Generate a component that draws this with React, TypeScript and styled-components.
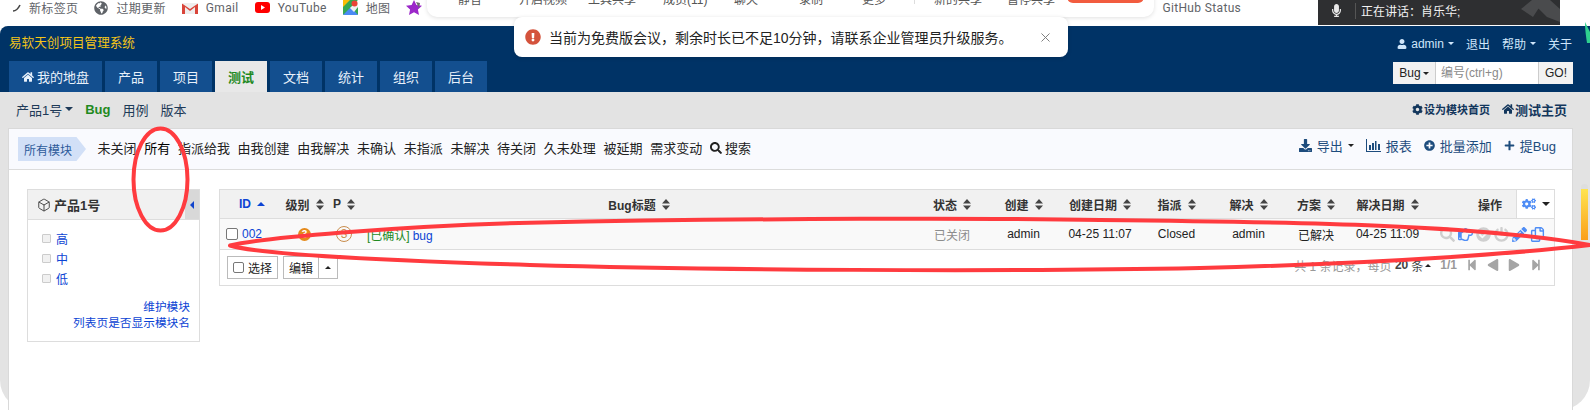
import React from "react";
import styled, { createGlobalStyle } from "styled-components";
import {
  FaCheckCircle,
  FaCog,
  FaCogs,
  FaDownload,
  FaExclamationCircle,
  FaGlobeAmericas,
  FaHome,
  FaMicrophone,
  FaPencilAlt,
  FaPlay,
  FaPlus,
  FaPlusCircle,
  FaPowerOff,
  FaRegCopy,
  FaRegHandPointRight,
  FaSearch,
  FaStepBackward,
  FaStepForward,
  FaUser,
} from "react-icons/fa";
import { Box, X } from "lucide-react";

const FONT = `"Liberation Sans", "Noto Sans CJK SC", sans-serif`;
const COLUMNS = "60px 49px 30px 560px 66px 77px 76px 77px 67px 68px 75px 91px 1fr";

const GlobalStyle = createGlobalStyle`
  html, body {
    margin: 0;
    padding: 0;
    background: #fff;
  }
  body {
    font-family: ${FONT};
    font-size: 13px;
    color: #333;
  }
`;

const Page = styled.div`
  position: relative;
  width: 1590px;
  height: 416px;
  overflow: hidden;
  background: #fff;
`;

const BookmarkBar = styled.div`
  display: flex;
  align-items: center;
  height: 26px;
  padding: 0 0 11px 12px;
  box-sizing: border-box;
  font-family: Roboto, "Noto Sans CJK SC", sans-serif;
  font-size: 12px;
  letter-spacing: 0.35px;
  color: #5f6368;
`;

const Bookmark = styled.div<{ $ml?: number }>`
  display: flex;
  align-items: center;
  gap: 8px;
  margin-left: ${(p) => p.$ml ?? 16}px;
  white-space: nowrap;
`;

const AppFrame = styled.div`
  display: flex;
  flex-direction: column;
  height: 384px;
  background: #e3e3e3;
  border-radius: 8px 0 30px 30px;
`;

const Header = styled.header`
  height: 66px;
  background: #003366;
  border-top-left-radius: 8px;
  flex-shrink: 0;
`;

const HeaderTop = styled.div`
  display: flex;
  align-items: center;
  justify-content: space-between;
  height: 35px;
  padding: 0 18px 0 9px;
  box-sizing: border-box;
`;

const Brand = styled.div`
  padding-bottom: 4px;
  color: #f5c518;
  font-size: 12.6px;
`;

const UserNav = styled.div`
  display: flex;
  align-items: center;
  gap: 12px;
  color: #cfe6fb;
  font-size: 12px;
`;

const UserItem = styled.span`
  display: flex;
  align-items: center;
  gap: 4px;
`;

const Caret = styled.i<{ $up?: boolean; $color?: string; $size?: number }>`
  display: inline-block;
  width: 0;
  height: 0;
  border-left: ${(p) => p.$size ?? 3}px solid transparent;
  border-right: ${(p) => p.$size ?? 3}px solid transparent;
  ${(p) => (p.$up ? "border-bottom" : "border-top")}: ${(p) => p.$size ?? 3}px solid ${(p) => p.$color ?? "currentColor"};
`;

const HeaderBottom = styled.div`
  display: flex;
  justify-content: space-between;
  padding: 0 17px 0 9px;
`;

const Tabs = styled.nav`
  display: flex;
  gap: 3px;
`;

const Tab = styled.a<{ $active?: boolean }>`
  display: flex;
  align-items: center;
  gap: 3px;
  height: 31px;
  padding: 0 13px;
  box-sizing: border-box;
  font-size: 13px;
  background: ${(p) => (p.$active ? "#e8e8e8" : "#134f8f")};
  color: ${(p) => (p.$active ? "#1f8a1f" : "#e8f1fb")};
  font-weight: ${(p) => (p.$active ? 700 : 400)};
`;

const SearchBox = styled.div`
  display: flex;
  width: 180px;
  height: 22px;
  margin-top: 1px;
  background: #fff;
  font-size: 12px;
`;

const SearchType = styled.div`
  display: flex;
  align-items: center;
  justify-content: center;
  gap: 2px;
  width: 43px;
  background: #f2f2f2;
  border-right: 1px solid #ccc;
  color: #222;
  box-sizing: border-box;
`;

const SearchInput = styled.input`
  flex: 1;
  min-width: 0;
  border: 0;
  outline: 0;
  padding: 0 5px;
  font: 12px ${FONT};
  &::placeholder {
    color: #8a8a8a;
    opacity: 1;
  }
`;

const SearchGo = styled.div`
  display: flex;
  align-items: center;
  justify-content: center;
  width: 35px;
  background: #f2f2f2;
  border-left: 1px solid #ccc;
  box-sizing: border-box;
  color: #222;
`;

const SubNav = styled.div`
  display: flex;
  align-items: center;
  justify-content: space-between;
  height: 36px;
  padding: 0 23px 2px 16px;
  box-sizing: border-box;
  flex-shrink: 0;
  color: #1e3a58;
`;

const SubNavGroup = styled.div`
  display: flex;
  align-items: center;
  gap: 12px;
`;

const ProductPicker = styled.span`
  display: flex;
  align-items: center;
  gap: 3px;
`;

const SubLink = styled.a<{ $active?: boolean }>`
  color: ${(p) => (p.$active ? "#1f8a1f" : "#1e3a58")};
  font-weight: ${(p) => (p.$active ? 700 : 400)};
`;

const SubAction = styled.a<{ $size: number }>`
  display: flex;
  align-items: center;
  gap: 1px;
  font-size: ${(p) => p.$size}px;
  font-weight: 700;
  color: #12365c;
`;

const Card = styled.main`
  flex: 1;
  margin: 0 17px 0 8px;
  background: #fff;
  border: 1px solid #d9d9d9;
  border-width: 1px 1px 0;
`;

const Toolbar = styled.div`
  display: flex;
  align-items: center;
  justify-content: space-between;
  height: 41px;
  padding: 0 16px 0 9px;
  box-sizing: border-box;
  background: #f9fafe;
  border-bottom: 1px solid #dcdcdc;
`;

const FilterGroup = styled.div`
  display: flex;
  align-items: center;
  gap: 7.7px;
`;

const ModuleTag = styled.div`
  display: flex;
  align-items: center;
  width: 68px;
  height: 24px;
  margin-right: 3.8px;
  padding-left: 6px;
  box-sizing: border-box;
  font-size: 12px;
  color: #2d5a9a;
  background: #d2e0f7;
  clip-path: polygon(0 0, 86% 0, 100% 50%, 86% 100%, 0 100%);
`;

const Filter = styled.a<{ $active?: boolean }>`
  display: flex;
  align-items: center;
  gap: 3px;
  padding-bottom: 3px;
  color: ${(p) => (p.$active ? "#000" : "#222")};
`;

const ActionGroup = styled.div`
  display: flex;
  align-items: center;
  gap: 12px;
  padding-bottom: 7px;
  color: #1d4c7d;
`;

const ToolAction = styled.a`
  display: flex;
  align-items: center;
  gap: 5px;
  color: #1d4c7d;
`;

const Body = styled.div`
  display: flex;
  align-items: flex-start;
  gap: 19px;
  padding: 19px 17px 0 18px;
`;

const Sidebar = styled.aside`
  display: flex;
  flex-direction: column;
  width: 173px;
  height: 153px;
  flex-shrink: 0;
  box-sizing: border-box;
  border: 1px solid #ddd;
`;

const SideHead = styled.div`
  display: flex;
  align-items: center;
  height: 30px;
  box-sizing: border-box;
  background: #f1f1f1;
  border-bottom: 1px solid #ddd;
  padding-left: 9px;
  gap: 3px;
  font-size: 13px;
  font-weight: 700;
  color: #333;
`;

const SideToggle = styled.div`
  display: flex;
  align-items: center;
  justify-content: center;
  align-self: stretch;
  width: 14px;
  margin-left: auto;
  background: #d8d8d8;
`;

const LeftCaret = styled.i`
  width: 0;
  height: 0;
  border-top: 4px solid transparent;
  border-bottom: 4px solid transparent;
  border-right: 4px solid #1144cc;
`;

const SideList = styled.ul`
  list-style: none;
  margin: 0;
  padding: 8px 0 0 14px;
`;

const SideItem = styled.li`
  display: flex;
  align-items: center;
  gap: 5px;
  height: 20px;
  font-size: 12px;
  color: #0c44d4;
`;

const SideBullet = styled.i`
  width: 7px;
  height: 7px;
  background: #f1f1f1;
  border: 1px solid #ccc;
  border-radius: 1px;
`;

const SideLinks = styled.div`
  display: flex;
  flex-direction: column;
  align-items: flex-end;
  margin-top: auto;
  padding: 0 9px 10px 0;
  font-size: 11.7px;
  line-height: 16px;
  color: #0c44d4;
`;

const BugTable = styled.section`
  flex: 1;
  box-sizing: border-box;
  border: 1px solid #ddd;
  font-size: 12px;
`;

const HeadRow = styled.div`
  display: grid;
  grid-template-columns: ${COLUMNS};
  height: 29px;
  box-sizing: border-box;
  background: #f1f1f1;
  border-bottom: 1px solid #ddd;
  font-weight: 700;
  color: #333;
`;

const HeadCell = styled.div<{ $justify?: string; $pad?: number; $padRight?: number; $bg?: string }>`
  display: flex;
  align-items: center;
  justify-content: ${(p) => p.$justify ?? "center"};
  gap: 6px;
  padding-left: ${(p) => p.$pad ?? 0}px;
  padding-right: ${(p) => p.$padRight ?? 0}px;
  box-sizing: border-box;
  ${(p) => p.$bg && `background: ${p.$bg}; border-left: 1px solid #ddd;`}
`;

const DataRow = styled.div`
  display: grid;
  grid-template-columns: ${COLUMNS};
  height: 31px;
  box-sizing: border-box;
  background: #f9f9f9;
  border-bottom: 1px solid #ddd;
  color: #222;
`;

const Cell = styled.div<{ $justify?: string; $muted?: boolean; $pad?: number }>`
  display: flex;
  align-items: center;
  justify-content: ${(p) => p.$justify ?? "center"};
  gap: 4px;
  padding-left: ${(p) => p.$pad ?? 0}px;
  color: ${(p) => (p.$muted ? "#8c8c8c" : "#222")};
  white-space: nowrap;
`;

const CheckBox = styled.i<{ $size?: number }>`
  display: inline-block;
  width: ${(p) => p.$size ?? 10}px;
  height: ${(p) => p.$size ?? 10}px;
  background: #fff;
  border: 1px solid #777;
  border-radius: 2px;
  flex-shrink: 0;
`;

const LinkText = styled.a`
  color: #0c44d4;
`;

const StatusTag = styled.span`
  color: #1f8a1f;
  margin-right: 3px;
`;

const Severity = styled.span`
  display: flex;
  align-items: center;
  justify-content: center;
  width: 13px;
  height: 13px;
  border-radius: 50%;
  background: #e58a1b;
  color: #fff;
  font-size: 10px;
  font-weight: 700;
`;

const Priority = styled.span`
  display: flex;
  align-items: center;
  justify-content: center;
  width: 14px;
  height: 14px;
  border-radius: 50%;
  border: 1px solid #c98d4d;
  color: #c98d4d;
  font-size: 12px;
`;

const RowActions = styled.div`
  display: flex;
  align-items: center;
  gap: 2px;
  grid-column: 12 / 14;
  padding-left: 14px;
  font-size: 15px;
`;

const RowIcon = styled.span<{ $blue?: boolean }>`
  display: flex;
  justify-content: center;
  width: 16px;
  color: ${(p) => (p.$blue ? "#4f8df5" : "#cfcfcf")};
`;

const TableFoot = styled.div`
  display: flex;
  align-items: flex-start;
  justify-content: space-between;
  height: 35px;
  padding: 6px 12px 0 7px;
  box-sizing: border-box;
`;

const FootButtons = styled.div`
  display: flex;
  gap: 5px;
`;

const FootButton = styled.button<{ $tight?: boolean }>`
  display: flex;
  align-items: center;
  gap: 4px;
  height: 23px;
  padding: 0 ${(p) => (p.$tight ? 6 : 5)}px;
  background: #fff;
  border: 1px solid #bbb;
  font: 12px ${FONT};
  color: #222;
  ${(p) => p.$tight && "border-left: 0;"}
`;

const SplitButton = styled.div`
  display: flex;
`;

const Pager = styled.div`
  display: flex;
  align-items: center;
  height: 20px;
  margin-top: -1px;
  color: #999;
  font-size: 12px;
  white-space: nowrap;
`;

const PagerStrong = styled.strong`
  color: #444;
`;

const PagerUnit = styled.span`
  margin: 0 2px 0 3px;
  color: #444;
`;

const PagerTotal = styled.span`
  margin-left: 9px;
  font-weight: 700;
`;

const PagerIcon = styled.span<{ $ml: number; $flip?: boolean }>`
  display: flex;
  margin-left: ${(p) => p.$ml}px;
  color: #a5a5a5;
  font-size: 12px;
  ${(p) => p.$flip && "transform: scaleX(-1);"}
`;

/* things floating over the page */
const MeetingBar = styled.div`
  position: absolute;
  left: 427px;
  top: -20px;
  display: flex;
  align-items: flex-start;
  width: 727px;
  height: 37px;
  padding: 10px 0 0 31px;
  box-sizing: border-box;
  background: #fff;
  border-radius: 0 0 10px 10px;
  box-shadow: 0 1px 4px rgba(0, 0, 0, 0.12);
  font-size: 12px;
  color: #555;
`;

const MeetingItem = styled.span<{ $w: number }>`
  width: ${(p) => p.$w}px;
  flex-shrink: 0;
  white-space: nowrap;
`;

const MeetingDivider = styled.i`
  width: 1px;
  height: 14px;
  margin-right: 19px;
  background: #ddd;
`;

const MeetingEnd = styled.i`
  width: 77px;
  height: 13px;
  background: #f25c3f;
  border-radius: 0 0 6px 6px;
`;

const Toast = styled.div`
  position: absolute;
  left: 514px;
  top: 17px;
  display: flex;
  align-items: center;
  gap: 8px;
  width: 554px;
  height: 40px;
  padding: 0 15px 0 11px;
  box-sizing: border-box;
  background: #fff;
  border-radius: 8px;
  box-shadow: 0 1px 4px rgba(0, 0, 0, 0.15);
  font-size: 14px;
  color: #222;
`;

const ToastClose = styled.span`
  display: flex;
  margin-left: auto;
  color: #777;
`;

const SpeakingBar = styled.div`
  position: absolute;
  left: 1318px;
  top: 0;
  display: flex;
  align-items: center;
  width: 242px;
  height: 25px;
  padding: 0 0 4px 12px;
  box-sizing: border-box;
  background: #2e2f31;
  color: #f2f2f2;
  font-size: 12px;
`;

const SpeakingDivider = styled.i`
  width: 1px;
  height: 16px;
  margin: 0 5px 0 12px;
  background: #555;
`;

const Watermark = styled.svg`
  position: absolute;
  right: 0;
  top: 0;
`;

const GreenEdge = styled.svg`
  position: absolute;
  right: 0;
  top: 22px;
`;

const ScrollGlow = styled.div`
  position: absolute;
  left: 1581px;
  top: 184px;
  width: 7px;
  height: 56px;
  border-radius: 3px 3px 0 0;
  background: linear-gradient(#dedede 0 5px, #ffe44f 5px, #fb9f1a 100%);
`;

const Annotations = styled.svg`
  position: absolute;
  left: 0;
  top: 0;
  pointer-events: none;
`;

const SortIcon = () => (
  <svg width="8" height="11" viewBox="0 0 8 11" fill="#444">
    <path d="M4 0 8 4.5H0ZM4 11 0 6.5H8Z" />
  </svg>
);

const ReportIcon = () => (
  <svg width="15" height="13" viewBox="0 0 15 13" fill="#1d4c7d">
    <path d="M0 0h1v12h14v1H0Z" />
    <path d="M3 6h2v5H3ZM6 4h2v7H6ZM9 2h1.5v9H9ZM12 5h2v6h-2Z" />
  </svg>
);

const NewTabMark = () => (
  <svg width="9" height="8" viewBox="0 0 9 8" fill="none" stroke="#444" strokeWidth="1.6">
    <path d="M1 7C3 7 6 5 8 1" />
  </svg>
);

const GmailIcon = () => (
  <svg width="16" height="12" viewBox="0 0 16 12">
    <rect x="1" y="1" width="14" height="11" fill="#eee" />
    <path d="M0 12V1.5L8 7l8-5.5V12h-3V5L8 9 3 5v7Z" fill="#d9453a" />
  </svg>
);

const YouTubeIcon = () => (
  <svg width="15" height="11" viewBox="0 0 15 11">
    <rect width="15" height="11" rx="3" fill="#f00" />
    <path d="M6 3v5l4-2.5Z" fill="#fff" />
  </svg>
);

const MapsIcon = () => (
  <svg width="15" height="15" viewBox="0 0 15 15">
    <rect width="15" height="15" rx="1" fill="#36a852" />
    <path d="M0 15 8 7l7 8Z" fill="#4a8af4" />
    <path d="M0 0h7L0 7Z" fill="#fbbc04" />
    <path d="M7 8 15 0v7l-4 5Z" fill="#f1f1f1" />
    <circle cx="11.5" cy="3.5" r="3" fill="#ea4335" />
  </svg>
);

const StarIcon = () => (
  <svg width="16" height="15" viewBox="0 0 16 15">
    <path d="M8 0l2.4 5 5.6.7-4.1 3.8 1.1 5.5L8 12.2 3 15l1.1-5.5L0 5.7 5.6 5Z" fill="#9b27c9" />
    <path d="M10 2l4 1-1 5Z" fill="#6d6d6d" />
  </svg>
);

const filters = ["未确认", "未指派", "未解决", "待关闭", "久未处理", "被延期", "需求变动"];
const tabs = ["产品", "项目", "测试", "文档", "统计", "组织", "后台"];
const sortable = ["状态", "创建", "创建日期", "指派", "解决", "方案", "解决日期"];

const App = () => (
  <Page>
    <GlobalStyle />
    <BookmarkBar>
      <Bookmark $ml={0}>
        <NewTabMark />
        新标签页
      </Bookmark>
      <Bookmark>
        <FaGlobeAmericas size={14} color="#5f6368" />
        过期更新
      </Bookmark>
      <Bookmark>
        <GmailIcon />
        Gmail
      </Bookmark>
      <Bookmark>
        <YouTubeIcon />
        YouTube
      </Bookmark>
      <Bookmark>
        <MapsIcon />
        地图
      </Bookmark>
      <Bookmark>
        <StarIcon />
      </Bookmark>
      <Bookmark $ml={740}>GitHub Status</Bookmark>
    </BookmarkBar>

    <AppFrame>
      <Header>
        <HeaderTop>
          <Brand>易软天创项目管理系统</Brand>
          <UserNav>
            <UserItem>
              <FaUser size={10} />
              admin
              <Caret />
            </UserItem>
            <span>退出</span>
            <UserItem>
              帮助
              <Caret />
            </UserItem>
            <span>关于</span>
          </UserNav>
        </HeaderTop>
        <HeaderBottom>
          <Tabs>
            <Tab>
              <FaHome size={12} />
              我的地盘
            </Tab>
            {tabs.map((t) => (
              <Tab key={t} $active={t === "测试"}>
                {t}
              </Tab>
            ))}
          </Tabs>
          <SearchBox>
            <SearchType>
              Bug
              <Caret />
            </SearchType>
            <SearchInput placeholder="编号(ctrl+g)" />
            <SearchGo>GO!</SearchGo>
          </SearchBox>
        </HeaderBottom>
      </Header>

      <SubNav>
        <SubNavGroup>
          <ProductPicker>
            产品1号
            <Caret $size={4} />
          </ProductPicker>
          <SubLink $active>Bug</SubLink>
          <SubLink>用例</SubLink>
          <SubLink>版本</SubLink>
        </SubNavGroup>
        <SubNavGroup>
          <SubAction $size={11}>
            <FaCog size={11} />
            设为模块首页
          </SubAction>
          <SubAction $size={13}>
            <FaHome size={12} />
            测试主页
          </SubAction>
        </SubNavGroup>
      </SubNav>

      <Card>
        <Toolbar>
          <FilterGroup>
            <ModuleTag>所有模块</ModuleTag>
            <Filter>未关闭</Filter>
            <Filter $active>所有</Filter>
            <Filter>指派给我</Filter>
            <Filter>由我创建</Filter>
            <Filter>由我解决</Filter>
            {filters.map((f) => (
              <Filter key={f}>{f}</Filter>
            ))}
            <Filter>
              <FaSearch size={12} />
              搜索
            </Filter>
          </FilterGroup>
          <ActionGroup>
            <ToolAction>
              <FaDownload size={13} />
              导出
              <Caret $color="#222" />
            </ToolAction>
            <ToolAction>
              <ReportIcon />
              报表
            </ToolAction>
            <ToolAction>
              <FaPlusCircle size={11} />
              批量添加
            </ToolAction>
            <ToolAction>
              <FaPlus size={11} />
              提Bug
            </ToolAction>
          </ActionGroup>
        </Toolbar>

        <Body>
          <Sidebar>
            <SideHead>
              <Box size={14} strokeWidth={1.5} />
              产品1号
              <SideToggle>
                <LeftCaret />
              </SideToggle>
            </SideHead>
            <SideList>
              {["高", "中", "低"].map((s) => (
                <SideItem key={s}>
                  <SideBullet />
                  {s}
                </SideItem>
              ))}
            </SideList>
            <SideLinks>
              <a>维护模块</a>
              <a>列表页是否显示模块名</a>
            </SideLinks>
          </Sidebar>

          <BugTable>
            <HeadRow>
              <HeadCell $justify="flex-start" $pad={19}>
                <LinkText>ID</LinkText>
                <Caret $up $size={4} $color="#0c44d4" />
              </HeadCell>
              <HeadCell>
                级别
                <SortIcon />
              </HeadCell>
              <HeadCell>
                P
                <SortIcon />
              </HeadCell>
              <HeadCell>
                Bug标题
                <SortIcon />
              </HeadCell>
              {sortable.map((c) => (
                <HeadCell key={c}>
                  {c}
                  <SortIcon />
                </HeadCell>
              ))}
              <HeadCell $justify="flex-end" $padRight={14}>
                操作
              </HeadCell>
              <HeadCell $bg="#fff">
                <FaCogs size={14} color="#4f8df5" />
                <Caret $size={4} $color="#222" />
              </HeadCell>
            </HeadRow>
            <DataRow>
              <Cell $justify="flex-start" $pad={6}>
                <CheckBox />
                <LinkText>002</LinkText>
              </Cell>
              <Cell>
                <Severity>3</Severity>
              </Cell>
              <Cell>
                <Priority>3</Priority>
              </Cell>
              <Cell $justify="flex-start" $pad={8}>
                <span>
                  <StatusTag>[已确认]</StatusTag>
                  <LinkText>bug</LinkText>
                </span>
              </Cell>
              <Cell $muted>已关闭</Cell>
              <Cell>admin</Cell>
              <Cell>04-25 11:07</Cell>
              <Cell>Closed</Cell>
              <Cell>admin</Cell>
              <Cell>已解决</Cell>
              <Cell>04-25 11:09</Cell>
              <RowActions>
                <RowIcon>
                  <FaSearch />
                </RowIcon>
                <RowIcon $blue>
                  <FaRegHandPointRight />
                </RowIcon>
                <RowIcon>
                  <FaCheckCircle />
                </RowIcon>
                <RowIcon>
                  <FaPowerOff />
                </RowIcon>
                <RowIcon $blue>
                  <FaPencilAlt />
                </RowIcon>
                <RowIcon $blue>
                  <FaRegCopy />
                </RowIcon>
              </RowActions>
            </DataRow>
            <TableFoot>
              <FootButtons>
                <FootButton>
                  <CheckBox $size={9} />
                  选择
                </FootButton>
                <SplitButton>
                  <FootButton>编辑</FootButton>
                  <FootButton $tight>
                    <Caret $up $color="#222" />
                  </FootButton>
                </SplitButton>
              </FootButtons>
              <Pager>
                共 1 条记录，每页&nbsp;<PagerStrong>20</PagerStrong>
                <PagerUnit>条</PagerUnit>
                <Caret $up $color="#222" />
                <PagerTotal>1/1</PagerTotal>
                <PagerIcon $ml={9}>
                  <FaStepBackward />
                </PagerIcon>
                <PagerIcon $ml={9} $flip>
                  <FaPlay />
                </PagerIcon>
                <PagerIcon $ml={9}>
                  <FaPlay />
                </PagerIcon>
                <PagerIcon $ml={10}>
                  <FaStepForward />
                </PagerIcon>
              </Pager>
            </TableFoot>
          </BugTable>
        </Body>
      </Card>
    </AppFrame>

    <ScrollGlow />

    <GreenEdge width="5" height="21" viewBox="0 0 5 21">
      <path d="M0 0 5 10V21H2C1 14 0 8 0 0Z" fill="#2fd08f" />
    </GreenEdge>

    <MeetingBar>
      <MeetingItem $w={61}>静音</MeetingItem>
      <MeetingItem $w={69}>开启视频</MeetingItem>
      <MeetingItem $w={75}>工具共享</MeetingItem>
      <MeetingItem $w={71}>成员(11)</MeetingItem>
      <MeetingItem $w={65}>聊天</MeetingItem>
      <MeetingItem $w={63}>录制</MeetingItem>
      <MeetingItem $w={52}>更多</MeetingItem>
      <MeetingDivider />
      <MeetingItem $w={73}>新的共享</MeetingItem>
      <MeetingItem $w={60}>暂停共享</MeetingItem>
      <MeetingEnd />
    </MeetingBar>

    <Toast>
      <FaExclamationCircle size={16} color="#d4533c" />
      当前为免费版会议，剩余时长已不足10分钟，请联系企业管理员升级服务。
      <ToastClose>
        <X size={15} strokeWidth={1.5} />
      </ToastClose>
    </Toast>

    <SpeakingBar>
      <FaMicrophone size={13} color="#e8e8e8" />
      <SpeakingDivider />
      正在讲话：肖乐华;
      <Watermark width="40" height="25" viewBox="0 0 40 25" fill="#4a4b4d">
        <path d="M12 0 24 0 13 17 1 9ZM30 0 40 9V22L27 17 18 8 24 0Z" />
      </Watermark>
    </SpeakingBar>

    <Annotations width="1590" height="416" viewBox="0 0 1590 416" fill="none" stroke="#ff3b3f" strokeWidth="4" strokeLinejoin="round">
      <ellipse cx="160.5" cy="179.5" rx="27" ry="51" />
      <path d="M230 245.5C260 238 400 226 530 222.7C750 218 1000 218 1100 220C1300 222 1480 225 1590 245C1530 252 1400 263 1200 268C1000 272 700 270 530 265C400 261 260 255 230 245.5Z" />
    </Annotations>
  </Page>
);

export default App;
